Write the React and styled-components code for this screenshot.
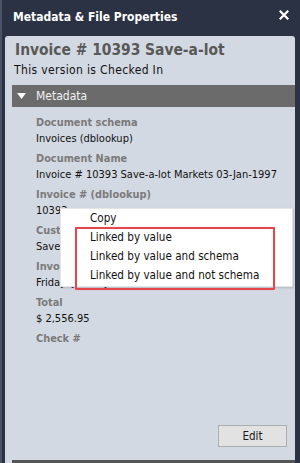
import React from "react";
import styled, { createGlobalStyle } from "styled-components";

const Global = createGlobalStyle`
  html, body { margin: 0; padding: 0; background: #2b3243; }
  body { font-family: "DejaVu Sans Condensed", "DejaVu Sans", sans-serif; }
  * { box-sizing: border-box; }
`;

const Window = styled.div`
  width: 300px;
  height: 463px;
  background: #2b3243;
  display: flex;
  flex-direction: column;
  overflow: hidden;
  border-left: 2px solid #4a5366;
`;

const Header = styled.div`
  height: 36px;
  flex: none;
  display: flex;
  align-items: center;
  justify-content: space-between;
  padding: 0 11px 2px 11px;
`;

const HeaderTitle = styled.div`
  color: #ffffff;
  font-weight: bold;
  font-size: 12px;
`;

const CloseButton = styled.div`
  width: 10px;
  height: 10px;
  margin-top: -5px;
  display: flex;
`;

const Panel = styled.div`
  position: relative;
  flex: 1;
  min-height: 0;
  margin: 0 5px 0 3px;
  background: #d3d9e2;
  border-radius: 3px 3px 0 0;
  display: flex;
  flex-direction: column;
  overflow: hidden;
`;

const DocTitle = styled.div`
  color: #585858;
  font-weight: bold;
  font-size: 15.4px;
  padding: 5px 0 0 10px;
  line-height: 18px;
  white-space: nowrap;
`;

const Status = styled.div`
  color: #111;
  font-size: 12px;
  letter-spacing: 0.35px;
  line-height: 16px;
  padding: 3px 0 0 9px;
`;

const SectionBar = styled.div`
  margin: ${(p) => (p.$bottom ? "13px 0 -19px 7px" : "7px 0 0 7px")};
  height: 22px;
  flex: none;
  background: ${(p) => (p.$bottom ? "#555555" : "#6b6b6b")};
  display: flex;
  align-items: center;
  gap: 10px;
  padding-left: 5px;
  color: #f2f2f2;
  font-size: 12px;
`;

const Fields = styled.div`
  display: flex;
  flex-direction: column;
  gap: 4px;
  padding: 8px 0 0 31px;
`;

const Field = styled.div`
  display: flex;
  flex-direction: column;
`;

const Label = styled.div`
  color: #7a7a7a;
  font-weight: bold;
  font-size: 10.9px;
  line-height: 16px;
`;

const Value = styled.div`
  color: #111;
  font-size: 11px;
  line-height: 16px;
  white-space: nowrap;
`;

const Spacer = styled.div`
  flex: 1;
`;

const ButtonRow = styled.div`
  flex: none;
  display: flex;
  justify-content: flex-end;
  padding-right: 8px;
`;

const Button = styled.button`
  width: 69px;
  height: 22px;
  background: #e2e2e2;
  border: 1px solid #adadad;
  color: #1a1a1a;
  font-family: inherit;
  font-size: 11.6px;
  padding: 0;
`;

const Menu = styled.div`
  position: absolute;
  left: 55px;
  top: 172px;
  width: 233px;
  height: 79px;
  background: #ffffff;
  border: 1px solid #e4e4e4;
  box-shadow: 1px 1px 2px rgba(0, 0, 0, 0.15);
`;

const MenuItem = styled.div`
  height: 19px;
  line-height: 19px;
  padding-left: 29px;
  font-size: 11.6px;
  color: #111;
  white-space: nowrap;
`;

const Highlight = styled.div`
  position: absolute;
  left: 14px;
  top: 18px;
  width: 200px;
  height: 63px;
  border: 2px solid #e5454b;
  border-radius: 1px;
  box-shadow: 0 0 1px rgba(229, 69, 75, 0.4);
  pointer-events: none;
`;

const fields = [
  ["Document schema", "Invoices (dblookup)"],
  ["Document Name", "Invoice # 10393 Save-a-lot Markets 03-Jan-1997"],
  ["Invoice # (dblookup)", "10393"],
  ["Customer", "Save-a-lot Markets"],
  ["Invoice Date", "Friday, January 03, 1997"],
  ["Total", "$ 2,556.95"],
  ["Check #", ""],
];

const menuItems = [
  "Copy",
  "Linked by value",
  "Linked by value and schema",
  "Linked by value and not schema",
];

export default function App() {
  return (
    <>
      <Global />
      <Window>
        <Header>
          <HeaderTitle>Metadata &amp; File Properties</HeaderTitle>
          <CloseButton>
            <svg width="10" height="10" viewBox="0 0 10 10">
              <path d="M1.5 1.5 L8.5 8.5 M8.5 1.5 L1.5 8.5" stroke="#fff" strokeWidth="2.2" strokeLinecap="square" />
            </svg>
          </CloseButton>
        </Header>
        <Panel>
          <DocTitle>Invoice # 10393 Save-a-lot</DocTitle>
          <Status>This version is Checked In</Status>
          <SectionBar>
            <svg width="9" height="6" viewBox="0 0 9 6">
              <path d="M0 0 H9 L4.5 6 Z" fill="#fff" />
            </svg>
            <span>Metadata</span>
          </SectionBar>
          <Fields>
            {fields.map(([l, v]) => (
              <Field key={l}>
                <Label>{l}</Label>
                {v && <Value>{v}</Value>}
              </Field>
            ))}
          </Fields>
          <Spacer />
          <ButtonRow>
            <Button>Edit</Button>
          </ButtonRow>
          <SectionBar $bottom />
          <Menu>
            {menuItems.map((m) => (
              <MenuItem key={m}>{m}</MenuItem>
            ))}
            <Highlight />
          </Menu>
        </Panel>
      </Window>
    </>
  );
}
